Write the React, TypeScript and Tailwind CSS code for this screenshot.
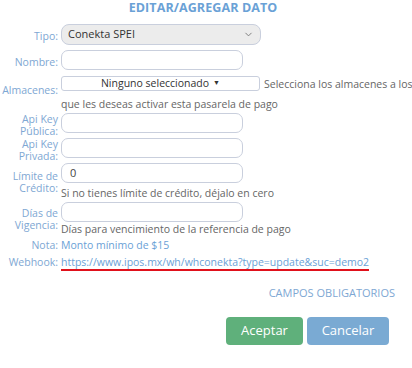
import { ChevronDown } from "lucide-react"

const label = "text-right align-middle pr-[3px] text-[10.5px] leading-[11.5px] text-[#7ea7d3] w-[61px] min-w-[61px]"
const input = "block w-[182px] h-[20px] rounded-[7px] border border-[#c9cfdd] bg-white px-2 text-[11px] text-[#444]"

export default function App() {
  return (
    <div className="w-[412px] h-[368px] bg-white font-['Open_Sans',sans-serif] text-[10.5px] text-[#666]">
      {/* ===== TITLE ===== */}
      <h1 className="text-center pr-[6px] pt-[1px] text-[12.5px] leading-[14px] font-bold tracking-[0.1px] text-[#6aa1d6]">
        EDITAR/AGREGAR DATO
      </h1>

      <table className="mt-[9px] border-separate border-spacing-0">
        <tbody>
          <tr>
            <td className={label}>Tipo:</td>
            <td className="pb-[5px]">
              <div className="flex items-center justify-between w-[200px] h-[21px] rounded-[8px] border border-[#c9cfdd] bg-[#ececec] pl-[6px] pr-[6px] text-[11px] text-[#333]">
                <span>Conekta SPEI</span>
                <ChevronDown size={11} strokeWidth={2} className="text-[#777]" />
              </div>
            </td>
          </tr>
          <tr>
            <td className={label}>Nombre:</td>
            <td className="pb-[6px]">
              <div className={input} />
            </td>
          </tr>
          <tr>
            <td className={`${label} pb-[7px]`}>Almacenes:</td>
            <td className="pb-[2px]">
              <div className="flex items-end gap-[4px]">
                <span className="flex items-center justify-center w-[199px] h-[15px] shrink-0 rounded-[3px] border border-[#c9cfdd] bg-white text-[10.5px] text-[#333]">
                  Ninguno seleccionado
                  <span className="ml-[4px] text-[7px]">▼</span>
                </span>
                <span className="leading-[13px] whitespace-nowrap">Selecciona los almacenes a los</span>
              </div>
              <div className="leading-[14px] mt-[6px]">que les deseas activar esta pasarela de pago</div>
            </td>
          </tr>
          <tr>
            <td className={label}>Api Key Pública:</td>
            <td className="pb-[5px]">
              <div className={input} />
            </td>
          </tr>
          <tr>
            <td className={label}>Api Key Privada:</td>
            <td className="pb-[5px]">
              <div className={input} />
            </td>
          </tr>
          <tr>
            <td className={label}>Límite de Crédito:</td>
            <td className="pb-[2px]">
              <div className={`${input} flex items-center text-[#333]`}>0</div>
              <div className="leading-[14px] mt-[3px]">Si no tienes límite de crédito, déjalo en cero</div>
            </td>
          </tr>
          <tr>
            <td className={label}>Días de Vigencia:</td>
            <td className="pb-[1px]">
              <div className={input} />
              <div className="leading-[14px]">Días para vencimiento de la referencia de pago</div>
            </td>
          </tr>
          <tr>
            <td className={label}>Nota:</td>
            <td className="leading-[17px] text-[#6aa1d6]">Monto mínimo de $15</td>
          </tr>
          <tr>
            <td className={label}>Webhook:</td>
            <td className="leading-[17px]">
              <a className="text-[#6aa1d6] border-b-2 border-[#e0111b]">
                https://www.ipos.mx/wh/whconekta?type=update&amp;suc=demo2
              </a>
            </td>
          </tr>
        </tbody>
      </table>

      <p className="mt-[14px] pr-[17px] text-right text-[11px] leading-[16px] text-[#7ea7d3]">CAMPOS OBLIGATORIOS</p>

      <div className="mt-[16px] flex justify-end gap-[4px] pr-[23px]">
        <button className="w-[77px] h-[28px] rounded-[4px] bg-[#5fb07b] text-[13px] text-white">Aceptar</button>
        <button className="w-[82px] h-[28px] rounded-[4px] bg-[#7aaad3] text-[13px] text-white">Cancelar</button>
      </div>
    </div>
  )
}
